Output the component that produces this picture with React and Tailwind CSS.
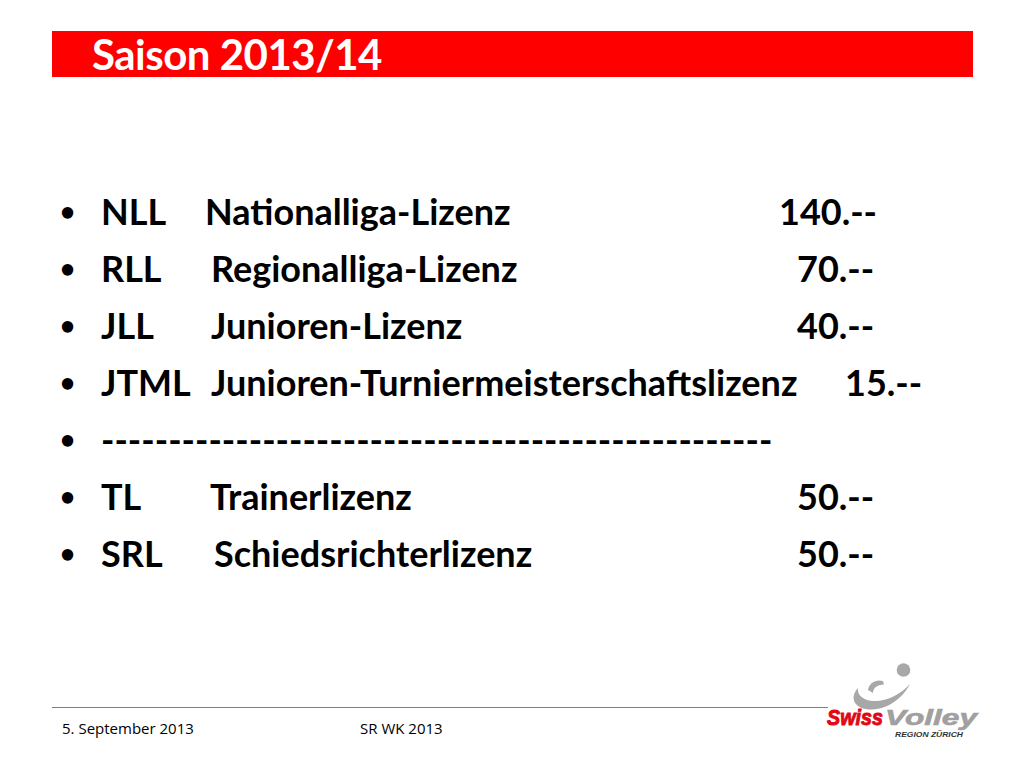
import React from "react";

const rows = [
  { abbr: "NLL", name: "Nationalliga-Lizenz", price: "140.--", abbrW: "w-[104px]", nameW: "w-[574px]" },
  { abbr: "RLL", name: "Regionalliga-Lizenz", price: "70.--", abbrW: "w-[110px]", nameW: "w-[586px]" },
  { abbr: "JLL", name: "Junioren-Lizenz", price: "40.--", abbrW: "w-[110px]", nameW: "w-[586px]" },
  { abbr: "JTML", name: "Junioren-Turniermeisterschaftslizenz", price: "15.--", abbrW: "w-[110px]", nameW: "w-[634px]" },
  { dashes: true },
  { abbr: "TL", name: "Trainerlizenz", price: "50.--", abbrW: "w-[109px]", nameW: "w-[587px]" },
  { abbr: "SRL", name: "Schiedsrichterlizenz", price: "50.--", abbrW: "w-[113px]", nameW: "w-[583px]" },
];

// Logo Swiss Volley Region Zürich
function Logo() {
  return (
    <svg width="170" height="95" viewBox="0 0 170 95">
      <circle cx="83.5" cy="15" r="6.8" fill="#a8a8a8" />
      <path d="M63 26 C 56 24, 49 28, 48 35 L 53 38 C 53 33, 57 30, 64 29.5 Z" fill="#a8a8a8" />
      <path
        d="M38 33 C 28 44, 36 55, 52 54.5 C 68 54, 83 43, 90 29 C 80 40, 66 46.5, 54 46 C 44 45.5, 37 41, 38 33 Z"
        fill="#a8a8a8"
      />
      <text
        x="7"
        y="70"
        fontSize="22"
        fontWeight="bold"
        fontStyle="italic"
        fill="#e30613"
        stroke="#e30613"
        strokeWidth="0.9"
        textLength="56"
        lengthAdjust="spacingAndGlyphs"
        fontFamily="'Liberation Sans', sans-serif"
      >
        Swiss
      </text>
      <text
        x="65"
        y="70"
        fontSize="22"
        fontWeight="bold"
        fontStyle="italic"
        fill="#a0a0a0"
        stroke="#a0a0a0"
        strokeWidth="0.6"
        textLength="92"
        lengthAdjust="spacingAndGlyphs"
        fontFamily="'Liberation Sans', sans-serif"
      >
        Volley
      </text>
      <text
        x="75"
        y="82"
        fontSize="7.6"
        fontWeight="bold"
        fontStyle="italic"
        fill="#333333"
        textLength="68"
        lengthAdjust="spacingAndGlyphs"
        fontFamily="'Liberation Sans', sans-serif"
      >
        REGION ZÜRICH
      </text>
    </svg>
  );
}

export default function App() {
  return (
    <div className="w-[1024px] h-[768px] bg-white relative overflow-hidden" style={{ fontFamily: "Lato, 'Liberation Sans', sans-serif" }}>
      {/* Titel */}
      <div className="mx-[52px] mt-[31px] h-[46px] w-[921px] bg-[#ff0000] flex items-center pl-[40px]">
        <h1 className="text-white font-bold text-[42px] leading-none tracking-[-0.5px]">Saison 2013/14</h1>
      </div>

      {/* Liste */}
      <div className="mt-[105px] pl-[60px]">
        {rows.map((r, i) => (
          <div key={i} className="flex items-center h-[57px] text-[36px] font-bold text-black leading-none">
            <span className="w-[41px] text-[26px]">•</span>
            {r.dashes ? (
              <span className="whitespace-nowrap">{"-".repeat(50)}</span>
            ) : (
              <>
                <span className={r.abbrW}>{r.abbr}</span>
                <span className={r.nameW + " whitespace-nowrap"}>{r.name}</span>
                <span>{r.price}</span>
              </>
            )}
          </div>
        ))}
      </div>

      {/* Fusszeile */}
      <div className="absolute left-[52px] top-[707px] w-[776px] h-px bg-[#7f7f7f]" />
      <div className="absolute left-[62px] top-[717px] flex text-[15px] text-black" style={{ fontFamily: "'Open Sans', 'Liberation Sans', sans-serif" }}>
        <span className="w-[298px]">5. September 2013</span>
        <span>SR WK 2013</span>
      </div>
      <div className="absolute left-[820px] top-[655px]">
        <Logo />
      </div>
    </div>
  );
}
